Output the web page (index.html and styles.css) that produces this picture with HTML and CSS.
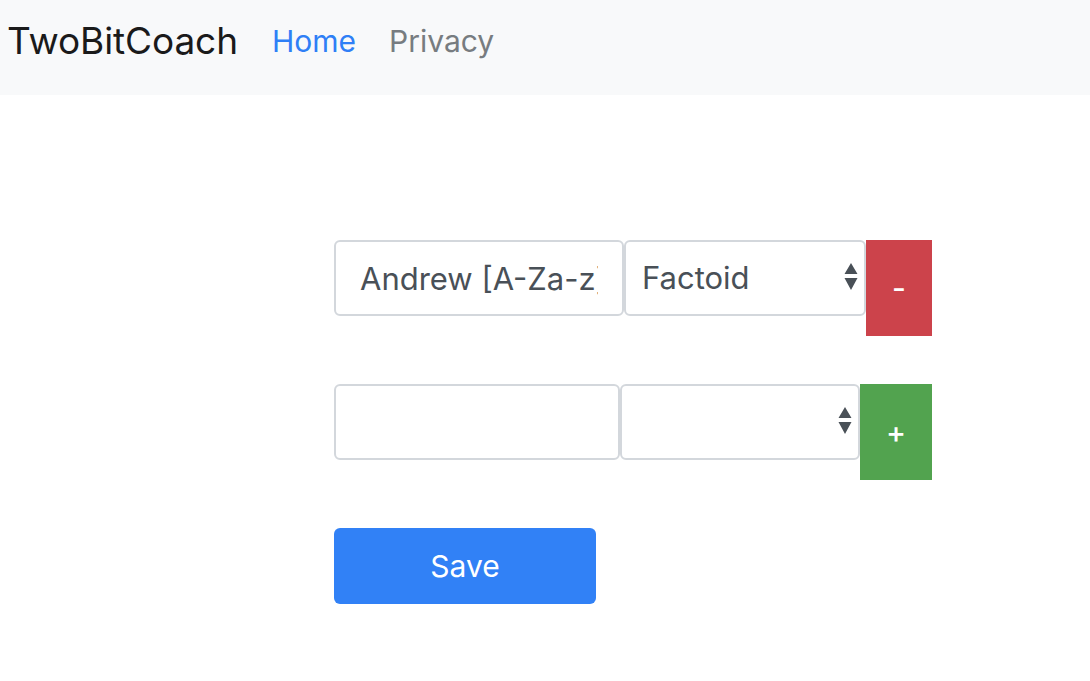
FILE: index.html
```html
<!DOCTYPE html>
<html>
<head>
<meta charset="utf-8">
<link rel="stylesheet" href="styles.css">
</head>
<body>
<nav class="navbar">
  <span class="brand">TwoBitCoach</span>
  <a class="nav-link active">Home</a>
  <a class="nav-link">Privacy</a>
</nav>
<main class="content">
  <div class="row row-first">
    <input class="field field-a" type="text" value="Andrew [A-Za-z]+">
    <div class="select-wrap select-a">
      <div class="select">Factoid</div>
      <svg class="arrows" width="14" height="30" viewBox="0 0 14 30"><path d="M7 0 L13.5 11 L0.5 11 Z M0.5 15 L13.5 15 L7 27 Z" fill="#495057"/></svg>
    </div>
    <button class="btn btn-remove">-</button>
  </div>
  <div class="row row-second">
    <input class="field field-b" type="text" value="">
    <div class="select-wrap select-b">
      <div class="select"></div>
      <svg class="arrows" width="14" height="30" viewBox="0 0 14 30"><path d="M7 0 L13.5 11 L0.5 11 Z M0.5 15 L13.5 15 L7 27 Z" fill="#495057"/></svg>
    </div>
    <button class="btn btn-add">+</button>
  </div>
  <button class="save">Save</button>
</main>
</body>
</html>
```
FILE: styles.css
```css
* { box-sizing: border-box; }
html, body { margin: 0; padding: 0; background: #fff; }
body { font-family: Inter, "Liberation Sans", Arial, sans-serif; }
.navbar {
  height: 95px;
  background: #f8f9fa;
  display: flex;
  align-items: flex-start;
  padding: 17px 0 0 7px;
}
.brand {
  font-size: 37px;
  line-height: 48px;
  color: #1a1a1a;
  margin-right: 34px;
  letter-spacing: -0.1px;
}
.nav-link {
  font-size: 30px;
  line-height: 48px;
  color: #777c80;
  margin-right: 33px;
}
.nav-link.active { color: #2f7ff6; }
.content {
  padding: 145px 0 0 334px;
}
.row { display: flex; align-items: flex-start; }
.row-first { margin-bottom: 48px; }
.row-second { margin-bottom: 48px; }
.field {
  height: 76px;
  border: 2px solid #d3d7dc;
  border-radius: 6px;
  padding: 0 24px;
  font-family: inherit;
  font-size: 31px;
  color: #495057;
  background: #fff;
  outline: none;
}
.field-a { width: 290px; }
.field-b { width: 286px; }
.select-wrap { position: relative; }
.select-a { width: 242px; }
.select-b { width: 240px; }
.select {
  height: 76px;
  border: 2px solid #d3d7dc;
  border-radius: 6px;
  padding: 0 16px;
  font-size: 31px;
  line-height: 72px;
  color: #495057;
  background: #fff;
}
.arrows {
  position: absolute;
  right: 8px;
  top: 23px;
}
.btn {
  height: 96px;
  border: none;
  color: #fff;
  font-family: inherit;
  font-size: 30px;
  font-weight: 500;
  padding: 0;
}
.btn-remove { width: 66px; background: #cc434b; }
.btn-add { width: 72px; background: #52a34f; }
.save {
  width: 262px;
  height: 76px;
  border: none;
  border-radius: 6px;
  background: #3181f6;
  color: #fff;
  font-family: inherit;
  font-size: 30px;
}
```
